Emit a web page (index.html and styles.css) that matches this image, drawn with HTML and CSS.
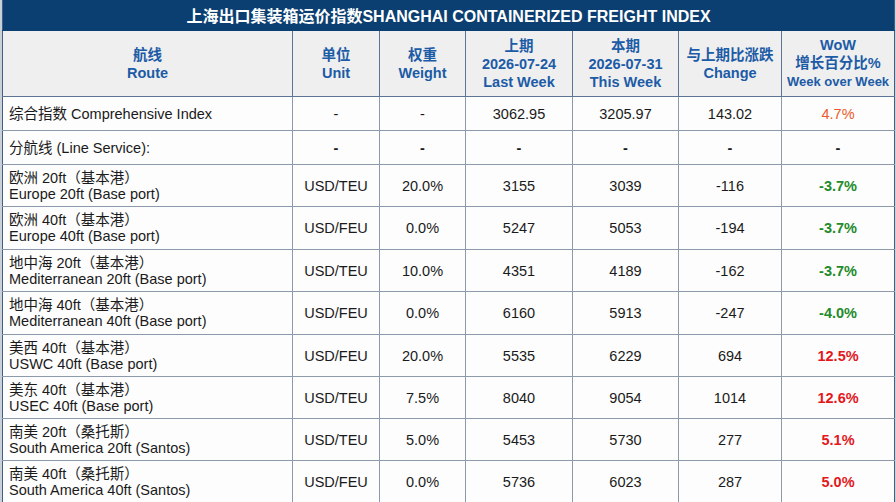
FILE: index.html
```html
<!DOCTYPE html>
<html lang="zh-CN">
<head>
<meta charset="utf-8">
<title>上海出口集装箱运价指数</title>
<link rel="stylesheet" href="styles.css">
</head>
<body>
<div class="frame">
<table class="scfi">
  <colgroup>
    <col class="c-route"><col class="c-unit"><col class="c-weight"><col class="c-last"><col class="c-this"><col class="c-chg"><col class="c-wow">
  </colgroup>
  <thead>
    <tr class="title-row"><th colspan="7">上海出口集装箱运价指数SHANGHAI CONTAINERIZED FREIGHT INDEX</th></tr>
    <tr class="head-row">
      <th>航线<br>Route</th>
      <th>单位<br>Unit</th>
      <th>权重<br>Weight</th>
      <th>上期<br>2026-07-24<br>Last Week</th>
      <th>本期<br>2026-07-31<br>This Week</th>
      <th>与上期比涨跌<br>Change</th>
      <th>WoW<br>增长百分比%<br><span class="small">Week over Week</span></th>
    </tr>
  </thead>
  <tbody>
    <tr class="short">
      <td class="route">综合指数 Comprehensive Index</td><td>-</td><td>-</td><td>3062.95</td><td>3205.97</td><td>143.02</td><td class="up-orange">4.7%</td>
    </tr>
    <tr class="short">
      <td class="route">分航线 (Line Service):</td><td class="dash">-</td><td class="dash">-</td><td class="dash">-</td><td class="dash">-</td><td class="dash">-</td><td class="dash">-</td>
    </tr>
    <tr class="tall">
      <td class="route">欧洲 20ft（基本港）<br>Europe 20ft (Base port)</td><td>USD/TEU</td><td>20.0%</td><td>3155</td><td>3039</td><td>-116</td><td class="down">-3.7%</td>
    </tr>
    <tr class="tall t43">
      <td class="route">欧洲 40ft（基本港）<br>Europe 40ft (Base port)</td><td>USD/FEU</td><td>0.0%</td><td>5247</td><td>5053</td><td>-194</td><td class="down">-3.7%</td>
    </tr>
    <tr class="tall">
      <td class="route">地中海 20ft（基本港）<br>Mediterranean 20ft (Base port)</td><td>USD/TEU</td><td>10.0%</td><td>4351</td><td>4189</td><td>-162</td><td class="down">-3.7%</td>
    </tr>
    <tr class="tall t43">
      <td class="route">地中海 40ft（基本港）<br>Mediterranean 40ft (Base port)</td><td>USD/FEU</td><td>0.0%</td><td>6160</td><td>5913</td><td>-247</td><td class="down">-4.0%</td>
    </tr>
    <tr class="tall">
      <td class="route">美西 40ft（基本港）<br>USWC 40ft (Base port)</td><td>USD/FEU</td><td>20.0%</td><td>5535</td><td>6229</td><td>694</td><td class="up">12.5%</td>
    </tr>
    <tr class="tall">
      <td class="route">美东 40ft（基本港）<br>USEC 40ft (Base port)</td><td>USD/TEU</td><td>7.5%</td><td>8040</td><td>9054</td><td>1014</td><td class="up">12.6%</td>
    </tr>
    <tr class="tall">
      <td class="route">南美 20ft（桑托斯）<br>South America 20ft (Santos)</td><td>USD/TEU</td><td>5.0%</td><td>5453</td><td>5730</td><td>277</td><td class="up">5.1%</td>
    </tr>
    <tr class="tall">
      <td class="route">南美 40ft（桑托斯）<br>South America 40ft (Santos)</td><td>USD/FEU</td><td>0.0%</td><td>5736</td><td>6023</td><td>287</td><td class="up">5.0%</td>
    </tr>
  </tbody>
</table>
</div>
</body>
</html>
```
FILE: styles.css
```css
html, body {
  margin: 0;
  padding: 0;
  background: #c9d0d8;
}
body {
  width: 896px;
  height: 502px;
  overflow: hidden;
  font-family: "Liberation Sans", Arial, "Noto Sans CJK SC", sans-serif;
  color: #1a1a1a;
}
.frame {
  padding-left: 2px;
}
.scfi {
  width: 892px;
  table-layout: fixed;
  border-collapse: collapse;
  background: #fdfdfd;
  font-size: 14.5px;
}
.c-route { width: 290px; }
.c-unit { width: 87px; }
.c-weight { width: 86px; }
.c-last { width: 107px; }
.c-this { width: 106px; }
.c-chg { width: 103px; }
.c-wow { width: 113px; }

.title-row th {
  height: 30px;
  padding: 0;
  background: #0c3f71;
  color: #ffffff;
  font-size: 16px;
  font-weight: bold;
  text-align: center;
  border-left: 1px solid #3f5f86;
  border-right: 1px solid #3f5f86;
  border-bottom: 1px solid #0c3f71;
}
.head-row th {
  height: 65px;
  padding: 0;
  background: #efefef;
  color: #1c5ba6;
  font-weight: bold;
  font-size: 14.5px;
  line-height: 18px;
  text-align: center;
  vertical-align: middle;
  border: 1px solid #5d7594;
}
.head-row th .small {
  font-size: 13px;
}
td {
  padding: 0;
  text-align: center;
  vertical-align: middle;
  border: 1px solid #8d9aab;
  line-height: 16px;
}
td.route {
  text-align: left;
  padding-left: 6px;
  white-space: nowrap;
}
tr > td:first-child {
  border-left: 1px solid #3f5f86;
}
tr > td:last-child, .head-row th:last-child {
  border-right: 1px solid #3f5f86;
}
.head-row th:first-child {
  border-left: 1px solid #3f5f86;
}
tr.short td { height: 33px; }
tr.tall td { height: 41px; }
tr.tall.t43 td { height: 42px; }
td.dash { font-weight: bold; }
td.up { color: #e3181c; font-weight: bold; }
td.up-orange { color: #ee5a2a; }
td.down { color: #228b2a; font-weight: bold; }
```
